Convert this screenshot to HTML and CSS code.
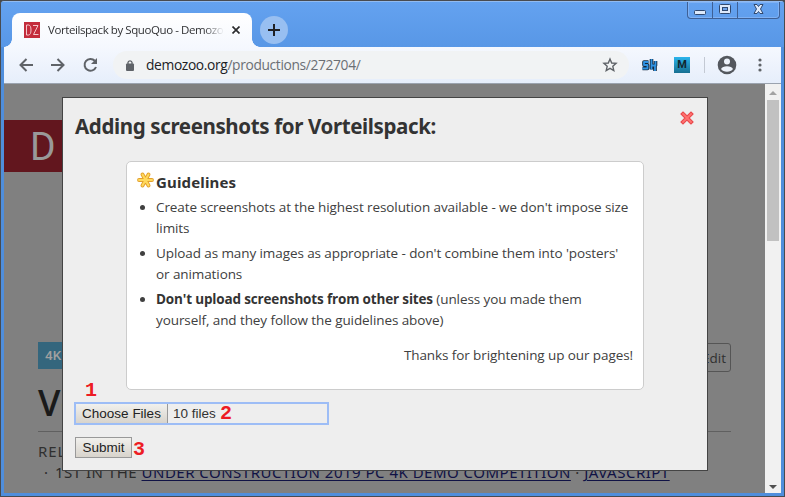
FILE: index.html
```
<!DOCTYPE html>
<html lang="en">
<head>
<meta charset="utf-8">
<title>Vorteilspack by SquoQuo - Demozoo</title>
<link rel="stylesheet" href="styles.css">
</head>
<body>
<div class="window">
  <header class="titlebar">
    <div class="tab">
      <span class="favicon"><svg width="16" height="16" viewBox="0 0 16 16" fill="none" stroke="#f4c5cb"><path d="M2.500 3v10h2.200q2.300-.4 2.300-5T4.700 3zM9 3.500h5L9.500 12.500H14.500"/></svg></span>
      <span class="tab-title">Vorteilspack by SquoQuo - Demozoo</span>
      <svg class="tab-close" width="8" height="8" viewBox="0 0 8 8" stroke="#2b2c2e" stroke-width="1.700"><path d="M.5.5l7 7M7.500.5l-7 7"/></svg>
    </div>
    <div class="new-tab"><svg width="12" height="12" viewBox="0 0 12 12" stroke="#202124" stroke-width="2"><path d="M6 0v12M0 6h12"/></svg></div>
    <div class="controls">
      <span class="ctl"><svg width="13" height="12" viewBox="0 0 13 12"><rect x=".5" y="6.500" width="11" height="4" rx="1" fill="#dce9fb" stroke="#31496f"/></svg></span>
      <span class="ctl"><svg width="12" height="12" viewBox="0 0 12 12" stroke="#31496f"><rect x=".5" y=".5" width="11" height="9" rx="1" fill="#dce9fb"/><rect x="3.500" y="3.500" width="5" height="3" fill="#6ea3ea"/></svg></span>
      <span class="ctl ctl-wide"><svg width="12" height="12" viewBox="0 0 12 12" fill="#dce9fb" stroke="#31496f"><path d="M1 .5h3l1.500 2 1.500-2h3L7.500 5 10 9.500H7l-1.500-2-1.500 2H1L3.500 5z"/></svg></span>
    </div>
  </header>
  <nav class="toolbar">
    <svg class="nav-icon" width="16" height="14" viewBox="0 0 16 14"><path d="M14 7H1.500M7.500 1l-6 6 6 6"/></svg>
    <svg class="nav-icon" width="16" height="14" viewBox="0 0 16 14"><path d="M0 7h12.500M6.500 1l6 6-6 6"/></svg>
    <svg class="nav-icon" width="16" height="16" viewBox="0 0 16 16"><path d="M13 10A5.900 5.900 0 1 1 11.800 3.800"/><path d="M14 1v6H8z" fill="#5f6368" stroke="none"/></svg>
    <div class="address">
      <svg width="10" height="13" viewBox="0 0 10 13"><rect x="1" y="4.500" width="8" height="7.500" rx="1" fill="#5f6368"/><path d="M3 5V3.200a2.200 2.200 0 0 1 4 0V5" fill="none" stroke="#5f6368" stroke-width="1.300"/></svg>
      <span class="url"><b>demozoo.org</b>/productions/272704/</span>
      <svg class="star" width="16" height="16" viewBox="0 0 16 16" fill="none" stroke="#5f6368" stroke-width="1.400"><path d="M8 2l1.700 4 4.400.4-3.300 2.900 1 4.300L8 11.300l-3.800 2.300 1-4.300-3.300-2.900L6.300 6z"/></svg>
    </div>
    <svg class="ext-sk" width="17" height="16" viewBox="0 0 17 16" fill="none" stroke-linejoin="round"><path d="M7.500 5H3v3h3.500v3.500H1.500M10.500 2v10.500M14.500 4v4.500h-4M14 8.500V14" stroke="#14283d" stroke-width="3.600"/><path d="M7.500 5H3v3h3.500v3.500H1.500M10.500 2v10.500M14.500 4v4.500h-4M14 8.500V14" stroke="#3093e3" stroke-width="1.800"/></svg>
    <span class="ext-m">M</span>
    <i class="divider"></i>
    <svg class="avatar" width="20" height="20" viewBox="0 0 20 20"><circle cx="10" cy="10" r="9.300" fill="#54585e"/><circle cx="10" cy="6.600" r="3" fill="#edf3fc"/><path d="M4 14q1.500-2.800 6-2.800t6 2.800q-2 2.800-6 2.800t-6-2.800z" fill="#edf3fc"/></svg>
    <svg class="kebab" width="4" height="14" viewBox="0 0 4 14" fill="#5f6368"><circle cx="2" cy="2" r="1.600"/><circle cx="2" cy="7" r="1.600"/><circle cx="2" cy="12" r="1.600"/></svg>
  </nav>
  <div class="content">
    <main class="page">
      <div class="brand">D</div>
      <div class="row"><span class="tag">4K Intro</span><span class="edit">Edit</span></div>
      <h1>Vorteilspack</h1>
      <div class="release">RELEASED 2019</div>
      <div class="rank"><span class="dot">·</span>1ST IN THE <a>UNDER CONSTRUCTION 2019 PC 4K DEMO COMPETITION</a> · <a>JAVASCRIPT</a></div>
      <section class="modal">
        <svg class="modal-close" width="14" height="14" viewBox="0 0 14 14" stroke-linecap="square"><path d="M3 3l8 8M11 3l-8 8" stroke="#e94a4d" stroke-width="4"/><path d="M3 3l8 8M11 3l-8 8" stroke="#ff7270" stroke-width="1.800"/></svg>
        <h2>Adding screenshots for Vorteilspack:</h2>
        <div class="panel">
          <h3><svg width="17" height="16" viewBox="0 0 17 16" stroke-linecap="round"><path d="M2 8h13M5.500 2.500l6 11M11.500 2.500l-6 11" stroke="#e3a02c" stroke-width="3.800"/><path d="M2 8h13M5.500 2.500l6 11M11.500 2.500l-6 11" stroke="#ffd95c" stroke-width="2"/></svg><span>Guidelines</span></h3>
          <ul>
            <li>Create screenshots at the highest resolution available - we don't impose size<br>limits</li>
            <li>Upload as many images as appropriate - don't combine them into 'posters'<br>or animations</li>
            <li><b>Don't upload screenshots from other sites</b> (unless you made them<br>yourself, and they follow the guidelines above)</li>
          </ul>
          <p>Thanks for brightening up our pages!</p>
        </div>
        <div class="file"><span class="btn">Choose Files</span><span class="count">10 files</span></div>
        <span class="btn submit">Submit</span>
        <span class="mark m1">1</span><span class="mark m2">2</span><span class="mark m3">3</span>
      </section>
    </main>
    <aside class="scrollbar"><i class="up"></i><i class="thumb"></i><i class="down"></i></aside>
  </div>
</div>
</body>
</html>
```
FILE: styles.css
```
* { box-sizing: border-box; }
body { margin: 0; background: #4a4a4a; overflow: hidden; }
svg { display: block; flex: none; }
.window {
  width: 785px; height: 497px; display: flex; flex-direction: column;
  border: 1px solid #484b50; border-radius: 4px 4px 0 0;
  padding: 0 3px 2px; background: #4f8edc; overflow: hidden;
}
.titlebar {
  height: 46px; flex: none; display: flex; margin: 0 -3px; padding-left: 11px;
  background: linear-gradient(#64a2f0, #5897e6); border-top: 1px solid #91bbf1;
}
.tab {
  position: relative; width: 240px; height: 34px; margin-top: 11px; padding: 0 11px 0 12px;
  background: linear-gradient(#fff, #f5f8fe); border-radius: 8px 8px 0 0; display: flex; align-items: center;
}
.tab::before, .tab::after { content: ""; position: absolute; bottom: 0; width: 8px; height: 8px; }
.tab::before { left: -8px; background: radial-gradient(circle at 0 0, transparent 7.500px, #f5f8fe 8px); }
.tab::after { right: -8px; background: radial-gradient(circle at 100% 0, transparent 7.500px, #f5f8fe 8px); }
.favicon { width: 16px; height: 16px; background: #c32c3c; flex: none; }
.tab-title {
  margin-left: 8px; width: 176px; overflow: hidden; white-space: nowrap; color: #303134;
  font: 11.500px/18px "Open Sans", sans-serif; letter-spacing: -.42px;
  -webkit-mask-image: linear-gradient(to right, #000 156px, transparent 176px);
  mask-image: linear-gradient(to right, #000 156px, transparent 176px);
}
.tab-close { margin-left: 8px; }
.new-tab { width: 28px; height: 28px; margin: 14px 0 0 8px; border-radius: 50%; background: #98bff1; display: flex; align-items: center; justify-content: center; }
.controls { display: flex; height: 17px; margin: 0 4px 0 auto; border: 1px solid #3e6095; border-top: 0; border-radius: 0 0 4px 4px; box-shadow: inset 0 0 0 1px #7fb1f4; }
.ctl { width: 25px; display: flex; justify-content: center; padding-top: 2px; border-right: 1px solid #3e6095; }
.ctl-wide { width: 41px; border: 0; }
.toolbar {
  height: 37px; flex: none; display: flex; align-items: center; width: 777px;
  padding-left: 15px; background: linear-gradient(#f5f8fe, #e6eefb); border-bottom: 1px solid #9ba3af;
}
.nav-icon { fill: none; stroke: #5f6368; stroke-width: 2; margin-right: 16px; }
.address { width: 516px; height: 28px; margin-left: -2px; border-radius: 14px; background: #f1f3f4; display: flex; align-items: center; padding: 0 11px 0 12px; }
.url { margin-left: 11px; font: 13.800px/20px "Open Sans", sans-serif; letter-spacing: -.36px; color: #6b6f74; white-space: nowrap; }
.url b { font-weight: 400; color: #202124; }
.star { margin-left: auto; }
.ext-sk { margin-left: 12px; }
.ext-m { width: 16px; height: 16px; margin-left: 16px; background: linear-gradient(#2ab4ec, #176f91); color: #12262f; font: bold 11px/16px Roboto, sans-serif; text-align: center; }
.divider { width: 1px; height: 16px; margin-left: 14px; background: #c3c9d3; }
.avatar { margin-left: 12px; }
.kebab { margin-left: 21px; }
.content { height: 409px; display: flex; width: 777px; }
.page { position: relative; width: 761px; height: 409px; background: #808080; overflow: hidden; color: #303030; }
.brand { width: 200px; height: 52px; margin-top: 36px; padding-left: 26px; background: #62161e; color: #999; font: 39px/54px Roboto, sans-serif; }
.row { display: flex; justify-content: space-between; align-items: flex-start; margin: 170px 34px 0; font: 13.500px/28px "Open Sans", sans-serif; }
.tag { padding: 0 7px; background: #34667d; color: #a0a0a0; font: 500 13.500px/27px Roboto, sans-serif; }
.edit { width: 60px; height: 29px; margin-top: 1px; border: 1px solid #555; border-radius: 3px; padding-right: 4px; text-align: right; }
h1 { margin: 6px 34px 0; height: 54px; border-bottom: 1px solid #606060; color: #1a1a1a; font: 600 36px/49px "Open Sans", sans-serif; }
.release, .rank { font: 15px/22px "Noto Sans", sans-serif; letter-spacing: .49px; white-space: nowrap; }
.release { margin: 8px 34px 0; letter-spacing: .9px; }
.rank { padding-left: 40px; height: 22px; line-height: 20px; color: #2b2b2b; }
.dot { display: inline-block; width: 11px; }
.rank a { color: #101245; text-decoration: underline; text-underline-offset: 2px; }
.modal { position: absolute; left: 58px; top: 13px; width: 646px; height: 374px; border: 1px solid #444; background: #eee; padding: 13px 12px 0; color: #333; font-family: "Open Sans", sans-serif; }
.modal-close { position: absolute; right: 13px; top: 13px; }
h2 { margin: 0; font: bold 20.500px/30px "Noto Sans", sans-serif; letter-spacing: -.37px; white-space: nowrap; }
.panel { width: 518px; height: 229px; margin: 20px 0 0 51px; border: 1px solid #ccc; border-radius: 5px; background: #fff; padding: 10px 10px 0; }
h3 { margin: 0; display: flex; gap: 2px; font: bold 15px/21px "Noto Sans", sans-serif; letter-spacing: .15px; }
ul { margin: 4px 0 0; padding: 0 0 0 19px; white-space: nowrap; }
ul, .panel p { color: #404040; font-size: 13.500px; line-height: 21px; letter-spacing: -.09px; }
li { margin-bottom: 4px; }
li b { color: #333; letter-spacing: -.16px; }
.panel p { margin: 14px 0 0; text-align: right; }
.file { width: 253px; height: 21px; margin: 13px 0 0 0; display: flex; outline: 2px solid #9dbdf6; outline-offset: -1px; }
.btn { display: inline-block; width: 93px; height: 21px; border: 1px solid #999; background: linear-gradient(#f1f0ed, #d8d4cc); color: #222; font: 13.500px/19px "Liberation Sans", sans-serif; text-align: center; }
.count { margin-left: 5px; font: 13.500px/21px "Liberation Sans", sans-serif; }
.submit { display: block; width: 57px; margin-top: 13px; }
.mark { position: absolute; color: #ed1c24; font: bold 20px/20px "Liberation Mono", monospace; }
.m1 { left: 22px; top: 283px; }
.m2 { left: 157px; top: 306px; }
.m3 { left: 70px; top: 342px; }
.scrollbar { width: 16px; background: #f1f1f1; display: flex; flex-direction: column; align-items: center; padding: 7px 0 4px; }
.up, .down { border: 4px solid transparent; }
.up { border-top: 0; border-bottom-color: #a3a3a3; }
.down { border-bottom: 0; border-top-color: #505050; margin-top: auto; }
.thumb { width: 12px; height: 141px; margin-top: 5px; background: #c1c1c1; }
```
